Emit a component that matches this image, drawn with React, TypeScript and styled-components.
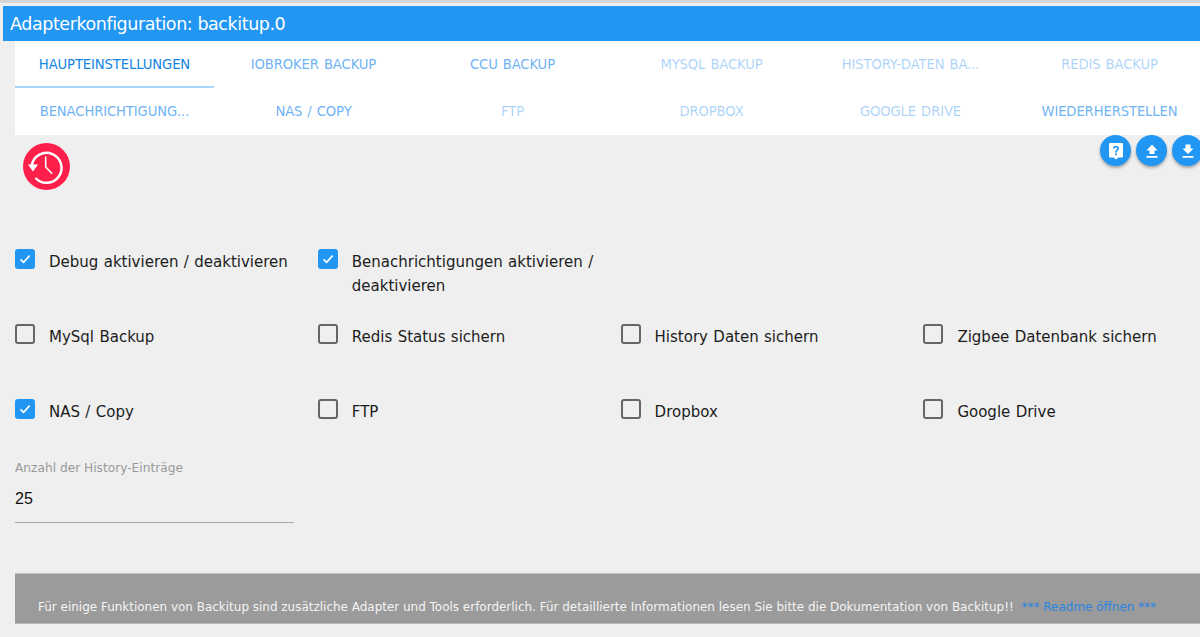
import React from "react";
import styled, { createGlobalStyle } from "styled-components";

const Global = createGlobalStyle`
  html, body { margin: 0; padding: 0; background: #efefef; }
  body { font-family: "DejaVu Sans", "Liberation Sans", sans-serif; }
`;

const Page = styled.div`
  width: 1200px;
  height: 637px;
  overflow: hidden;
  box-sizing: border-box;
  border-top: 3px solid #d6d6d6;
  padding: 3px 0 0 3px;
  background: #efefef;
  position: relative;
`;

const TitleBar = styled.div`
  height: 35px;
  background: #2196f3;
  color: #fff;
  font-size: 17.5px;
  line-height: 37px;
  padding-left: 7px;
  letter-spacing: -0.43px;
`;

const Tabs = styled.div`
  margin-left: 12px;
  background: #fff;
  display: grid;
  grid-template-columns: repeat(6, 199px);
  grid-auto-rows: 47px;
  width: 1185px;
  overflow: hidden;
`;

const Tab = styled.div<{ $state: "active" | "normal" | "dim" }>`
  box-sizing: border-box;
  font-size: 13.2px;
  letter-spacing: -0.12px;
  word-spacing: 1px;
  line-height: 47px;
  text-align: center;
  white-space: nowrap;
  color: ${(p) => (p.$state === "active" ? "#1284e6" : p.$state === "normal" ? "rgba(33,140,240,0.68)" : "rgba(33,140,240,0.38)")};
  border-bottom: ${(p) => (p.$state === "active" ? "2px solid #a9d6f8" : "0")};
`;

const Toolbar = styled.div`
  height: 115px;
  position: relative;
  padding: 8px 0 0 20px;
  box-sizing: border-box;
`;

const Logo = styled.div`
  width: 47px;
  height: 47px;
  border-radius: 50%;
  background: #ff1f4b;
`;

const Fabs = styled.div`
  position: absolute;
  top: 0;
  right: -3px;
  display: flex;
  gap: 5px;
`;

const Fab = styled.div`
  width: 31px;
  height: 31px;
  border-radius: 50%;
  background: #2196f3;
  box-shadow: 0 2px 3px rgba(0, 0, 0, 0.3);
  display: flex;
  align-items: center;
  justify-content: center;
`;

const Grid = styled.div`
  margin-left: 12px;
  display: grid;
  grid-template-columns: repeat(4, 302.8px);
`;

const Field = styled.div<{ $h: number }>`
  height: ${(p) => p.$h}px;
  display: flex;
  align-items: flex-start;
  gap: 14px;
`;

const Box = styled.div<{ $on?: boolean }>`
  flex: none;
  box-sizing: border-box;
  width: 20px;
  height: 20px;
  margin-top: -1px;
  border-radius: 3px;
  border: ${(p) => (p.$on ? "none" : "2px solid #666")};
  background: ${(p) => (p.$on ? "#2196f3" : "transparent")};
  display: flex;
  align-items: center;
  justify-content: center;
`;

const Label = styled.div`
  font-size: 15px;
  word-spacing: 0.6px;
  line-height: 24px;
  color: #1c1c1c;
  width: 254px;
`;

const InputBlock = styled.div`
  margin: -7px 0 0 12px;
  width: 279px;
  height: 62px;
  border-bottom: 1px solid #a9a9a9;
`;

const InputLabel = styled.div`
  font-size: 12.2px;
  line-height: 16px;
  color: #999;
`;

const InputValue = styled.div`
  margin-top: 13px;
  font-family: "Liberation Sans", sans-serif;
  font-size: 16px;
  line-height: 19px;
  color: #111;
`;

const Note = styled.div`
  margin: 50px 0 0 12px;
  height: 51px;
  background: #9b9b9b;
  border-top: 1px solid #c4c4c4;
  border-bottom: 1px solid #b9b9b9;
  box-sizing: border-box;
  padding: 25px 0 0 23px;
  font-size: 11.97px;
  line-height: 17px;
  color: #f4f4f4;
  white-space: nowrap;
`;

const Link = styled.span`
  color: #2b85e0;
  margin-left: 4px;
`;

const Check = () => (
  <svg width="14" height="14" viewBox="0 0 14 14" fill="none">
    <path d="M2.500 7.400 5.600 10.400 11.600 3.600" stroke="#fff" strokeWidth="1.6" />
  </svg>
);

const tabs: [string, "active" | "normal" | "dim"][] = [
  ["HAUPTEINSTELLUNGEN", "active"],
  ["IOBROKER BACKUP", "normal"],
  ["CCU BACKUP", "normal"],
  ["MYSQL BACKUP", "dim"],
  ["HISTORY-DATEN BA...", "dim"],
  ["REDIS BACKUP", "dim"],
  ["BENACHRICHTIGUNG...", "normal"],
  ["NAS / COPY", "normal"],
  ["FTP", "dim"],
  ["DROPBOX", "dim"],
  ["GOOGLE DRIVE", "dim"],
  ["WIEDERHERSTELLEN", "normal"],
];

const fields: [string, boolean, number][] = [
  ["Debug aktivieren / deaktivieren", true, 75],
  ["Benachrichtigungen aktivieren / deaktivieren", true, 75],
  ["", false, 75],
  ["", false, 75],
  ["MySql Backup", false, 75],
  ["Redis Status sichern", false, 75],
  ["History Daten sichern", false, 75],
  ["Zigbee Datenbank sichern", false, 75],
  ["NAS / Copy", true, 67],
  ["FTP", false, 67],
  ["Dropbox", false, 67],
  ["Google Drive", false, 67],
];

export default function App() {
  return (
    <>
      <Global />
      <Page>
        <TitleBar>Adapterkonfiguration: backitup.0</TitleBar>
        <Tabs>
          {tabs.map(([t, s]) => (
            <Tab key={t} $state={s}>{t}</Tab>
          ))}
        </Tabs>
        <Toolbar>
          <Logo>
            <svg width="47" height="47" viewBox="0 0 47 47" fill="none" stroke="#fff" strokeWidth="2.500">
              <path d="M8.800 22A15 15 0 1 1 12.500 35" />
              <path d="M5 21.500h10L10 28.500z" fill="#fff" stroke="none" />
              <path d="M22.700 13.500V24l6.500 6.700" strokeWidth="1.600" />
            </svg>
          </Logo>
          <Fabs>
            <Fab>
              <svg width="18" height="18" viewBox="0 0 18 18">
                <path fillRule="evenodd" fill="#fff" d="M3 1h12a1 1 0 0 1 1 1v12.500a1 1 0 0 1-1 1h-3.600L9 17.500 6.600 15.500H3a1 1 0 0 1-1-1V2a1 1 0 0 1 1-1zM8.100 11.500v1.800h1.800v-1.800zM9 3.800c-1.700 0-2.900 1.100-3 2.700h1.700c.1-.7.6-1.100 1.300-1.100.7 0 1.200.4 1.200 1 0 1.200-2.100 1.400-2.100 4.200h1.800c0-2.200 2.100-2.400 2.100-4.300 0-1.500-1.300-2.500-3-2.500z" />
              </svg>
            </Fab>
            <Fab>
              <svg width="18" height="18" viewBox="0 0 18 18">
                <path fill="#fff" d="M9 2.500 14.500 8.500H11.500V12H6.500V8.500H3.500zM3.500 14h11v1.700h-11z" />
              </svg>
            </Fab>
            <Fab>
              <svg width="18" height="18" viewBox="0 0 18 18">
                <path fill="#fff" d="M6.500 2.500h5V6.500h3L9 12 3.500 6.500h3zM3.500 14h11v1.700h-11z" />
              </svg>
            </Fab>
          </Fabs>
        </Toolbar>
        <Grid>
          {fields.map(([t, on, h], i) =>
            t ? (
              <Field key={i} $h={h}>
                <Box $on={on}>{on && <Check />}</Box>
                <Label>{t}</Label>
              </Field>
            ) : (
              <div key={i} />
            )
          )}
        </Grid>
        <InputBlock>
          <InputLabel>Anzahl der History-Einträge</InputLabel>
          <InputValue>25</InputValue>
        </InputBlock>
        <Note>
          Für einige Funktionen von Backitup sind zusätzliche Adapter und Tools erforderlich. Für detaillierte Informationen lesen Sie bitte die Dokumentation von Backitup!!
          <Link> *** Readme öffnen ***</Link>
        </Note>
      </Page>
    </>
  );
}
